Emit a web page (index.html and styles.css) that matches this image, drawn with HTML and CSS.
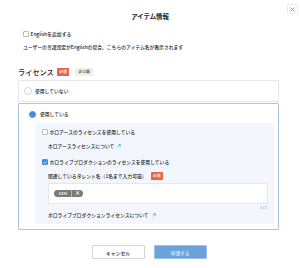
FILE: index.html
```html
<!DOCTYPE html>
<html lang="ja">
<head>
  <meta charset="UTF-8" />
  <title>アイテム情報</title>
  <link rel="stylesheet" href="styles.css">
</head>
<body>
  <div class="modal">
    <header class="modal-header">
      <div class="modal-title">アイテム情報</div>
      <button class="close-btn" aria-label="閉じる">
        <svg viewBox="0 0 10 10" width="5" height="5"><path d="M1 1 L9 9 M9 1 L1 9" stroke="#888" stroke-width="1.6" fill="none"/></svg>
      </button>
    </header>

    <div class="modal-body">
      <div class="english">
        <label class="check-row">
          <span class="checkbox"></span>
          <span>Englishを追加する</span>
        </label>
        <p class="note">ユーザーの言語設定がEnglishの場合、こちらのアイテム名が表示されます</p>
      </div>

      <div class="section-title">
        <h2>ライセンス</h2>
        <span class="badge required">必須</span>
        <span class="badge private">非公開</span>
      </div>

      <div class="options">
        <div class="option">
          <div class="radio-row">
            <span class="radio"></span>
            <span>使用していない</span>
          </div>
        </div>

        <div class="option selected">
          <div class="radio-row">
            <span class="radio"></span>
            <span>使用している</span>
          </div>

          <div class="license-panel">
            <label class="check-row">
              <span class="checkbox"></span>
              <span>ホロアースのライセンスを使用している</span>
            </label>
            <a class="link-row">ホロアースライセンスについて
              <svg viewBox="0 0 8 8" width="4" height="4"><path d="M1.2 6.8 L6.5 1.5 M2.6 1.2 H6.8 V5.4" stroke="#4a8ed8" stroke-width="1.3" fill="none"/></svg>
            </a>

            <label class="check-row">
              <span class="checkbox checked">
                <svg viewBox="0 0 8 8" width="5" height="5"><path d="M1.5 4.2 L3.3 6 L6.6 2" stroke="#fff" stroke-width="1.4" fill="none"/></svg>
              </span>
              <span>ホロライブプロダクションのライセンスを使用している</span>
            </label>

            <div class="talent">
              <div class="talent-label">
                <span>関連しているタレント名（1名まで入力可能）</span>
                <span class="badge required">必須</span>
              </div>
              <div class="talent-input">
                <span class="tag">
                  <span class="tag-name">AZKi</span>
                  <span class="tag-remove">×</span>
                </span>
              </div>
              <div class="counter">1 / 1</div>
            </div>

            <a class="link-row">ホロライブプロダクションライセンスについて
              <svg viewBox="0 0 8 8" width="4" height="4"><path d="M1.2 6.8 L6.5 1.5 M2.6 1.2 H6.8 V5.4" stroke="#4a8ed8" stroke-width="1.3" fill="none"/></svg>
            </a>
          </div>
        </div>
      </div>
    </div>

    <footer class="modal-footer">
      <button class="btn btn-cancel">キャンセル</button>
      <button class="btn btn-submit">申請する</button>
    </footer>
  </div>
</body>
</html>
```

FILE: styles.css
```css
* {
  box-sizing: border-box;
}

body {
  margin: 0;
  background: #fff;
  color: #222;
  font-family: "Noto Sans CJK JP", "Noto Sans", sans-serif;
  font-size: 4.8px;
  font-weight: 500;
}

.modal {
  position: relative;
  width: 300px;
  height: 268px;
}

.modal-header {
  padding-top: 13px;
}

.modal-title {
  text-align: center;
  font-size: 6.4px;
  line-height: 8px;
  font-weight: 700;
}

.close-btn {
  position: absolute;
  top: 4px;
  right: 2px;
  width: 11px;
  height: 10px;
  padding: 0;
  border: 1px solid #ececec;
  border-radius: 1px;
  background: #fff;
  display: flex;
  align-items: center;
  justify-content: center;
}

.modal-body {
  padding: 0 21px 0 18px;
}

.english {
  padding-left: 5px;
  margin-top: 9px;
}

.check-row {
  display: flex;
  align-items: center;
  height: 8px;
  line-height: 8px;
}

.checkbox {
  width: 6px;
  height: 6px;
  margin-right: 1.5px;
  border: 0.6px solid #bbb;
  border-radius: 1px;
  background: #fff;
  display: flex;
  align-items: center;
  justify-content: center;
}

.checkbox.checked {
  background: #4a8ed8;
  border-color: #4a8ed8;
}

.note {
  margin: 5px 0 0;
  line-height: 8px;
}

.section-title {
  display: flex;
  align-items: center;
  margin-top: 16px;
  height: 10px;
}

.section-title h2 {
  margin: 0 3px 0 0;
  font-size: 7.2px;
  font-weight: 500;
  line-height: 10px;
}

.badge {
  font-size: 3.8px;
  line-height: 7.5px;
  height: 7.5px;
  padding: 0 2.5px;
  border-radius: 0.5px;
}

.badge.required {
  background: #e6654f;
  color: #fff;
}

.badge.private {
  margin-left: 6px;
  background: #eee;
  color: #444;
  padding: 0 3px;
}

.options {
  margin-top: 3px;
}

.option {
  border: 1px solid #e6e6e6;
  border-radius: 1px;
}

.option:first-child {
  height: 22px;
  display: flex;
  align-items: center;
}

.option.selected {
  margin-top: 1px;
  border-color: #a7c7e7;
  padding: 6px 4px 5px 16px;
}

.radio-row {
  display: flex;
  align-items: center;
  height: 8px;
  line-height: 8px;
}

.option:first-child .radio-row {
  padding-left: 5px;
}

.radio {
  width: 8px;
  height: 8px;
  margin-right: 3px;
  border: 0.6px solid #d6d6d6;
  border-radius: 50%;
  background: #fff;
}

.option.selected .radio {
  width: 7px;
  height: 7px;
  margin-left: -6px;
  margin-right: 4px;
  border-color: #4a8ed8;
  background: #4a8ed8;
}

.license-panel {
  margin-top: 5px;
  padding: 5px 6px 5px 7px;
  background: #f3f7fd;
  display: flex;
  flex-direction: column;
}

.link-row {
  display: flex;
  align-items: center;
  gap: 3px;
  height: 8px;
  line-height: 8px;
  padding-left: 6px;
  margin-top: 6px;
  color: #222;
}

.license-panel .check-row:nth-of-type(2) {
  margin-top: 8px;
}

.talent {
  padding-left: 6px;
  margin-top: 6px;
}

.talent-label {
  display: flex;
  align-items: center;
  height: 8px;
  line-height: 8px;
}

.talent-label .badge {
  margin-left: 4px;
}

.talent-input {
  margin-top: 3px;
  height: 21px;
  background: #fff;
  border: 0.6px solid #e3e7ee;
  display: flex;
  align-items: center;
  padding-left: 5px;
}

.tag {
  display: flex;
  align-items: center;
  height: 7px;
  background: #7a7a7a;
  border-radius: 3.5px;
  color: #fff;
  font-size: 4px;
  line-height: 7px;
}

.tag-name {
  padding: 0 4px 0 4.5px;
  border-right: 0.6px solid #b5b5b5;
}

.tag-remove {
  padding: 0 3px 0 2.5px;
  font-size: 5.5px;
  font-weight: 700;
}

.counter {
  margin-top: 1px;
  height: 6px;
  line-height: 6px;
  text-align: right;
  font-size: 3.6px;
  color: #888;
  padding-right: 1px;
}

.talent + .link-row {
  margin-top: 0;
}

.modal-footer {
  display: flex;
  justify-content: center;
  gap: 9px;
  margin-top: 15px;
  padding-right: 2px;
}

.btn {
  width: 53px;
  height: 14px;
  padding: 0;
  font-family: inherit;
  font-size: 4.8px;
  font-weight: 500;
  border-radius: 1px;
}

.btn-cancel {
  background: #fff;
  border: 0.6px solid #d4d4d4;
  color: #222;
}

.btn-submit {
  background: #6ba2da;
  border: 0.6px solid #9cc2ea;
  color: #dce9f7;
}
```
